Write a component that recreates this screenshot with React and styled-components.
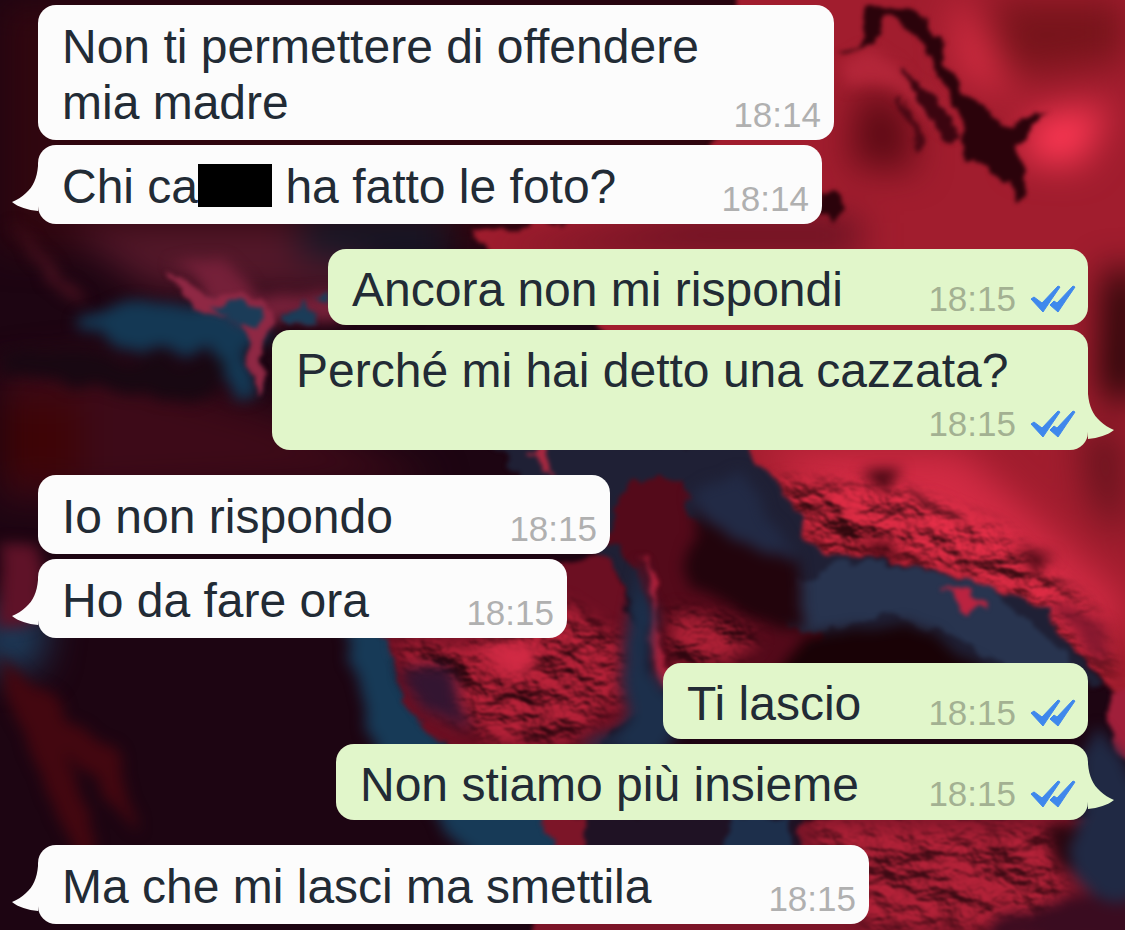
import React from "react";
import styled, { createGlobalStyle } from "styled-components";

const GlobalStyle = createGlobalStyle`
    *, *::before, *::after {
        box-sizing: border-box;
    }

    body {
        margin: 0;
        background-color: #1c0512;
        font-family: "Liberation Sans", Arial, sans-serif;
    }
`;

const Screen = styled.main`
    position: relative;
    overflow: hidden;
    min-height: 100vh;
    padding: 5px 37px 6px 38px;
`;

const WallpaperSvg = styled.svg`
    position: absolute;
    inset: 0;
    width: 100%;
    height: 100%;
`;

const Thread = styled.div`
    position: relative;
    display: flex;
    flex-direction: column;
    gap: 25px;
`;

const Group = styled.section`
    display: flex;
    flex-direction: column;
    align-items: ${props => (props.$mine ? "flex-end" : "flex-start")};
    gap: 5px;
`;

const Bubble = styled.article`
    position: relative;
    display: flex;
    flex-direction: ${props => (props.$stacked ? "column" : "row")};
    align-items: flex-end;
    justify-content: space-between;
    gap: 6px;
    width: ${props => props.$width}px;
    max-width: 100%;
    padding: ${props => (props.$mine ? "13px 12px 7px 24px" : "14px 13px 6px 24px")};
    border-radius: 18px;
    background-color: ${props => (props.$mine ? "#e1f6ca" : "#fcfcfc")};
`;

const MessageText = styled.p`
    align-self: flex-start;
    margin: 0;
    padding-bottom: ${props => (props.$mine ? "0" : "3px")};
    font-size: 48px;
    line-height: 56px;
    color: #222b35;
`;

const Meta = styled.div`
    display: flex;
    flex: none;
    align-items: center;
    gap: 14px;
    font-size: 35px;
    line-height: 38px;
    color: ${props => (props.$mine ? "#a3b192" : "#b0b0b0")};
`;

const Redacted = styled.span`
    display: inline-block;
    width: 74px;
    height: 43px;
    vertical-align: -4px;
    background-color: #000;
`;

const TailSvg = styled.svg`
    position: absolute;
    bottom: ${props => (props.$mine ? "11px" : "13px")};
    left: ${props => (props.$mine ? "100%" : "auto")};
    right: ${props => (props.$mine ? "auto" : "100%")};
    width: 26px;
    height: 45px;
    fill: ${props => (props.$mine ? "#e1f6ca" : "#fcfcfc")};
    transform: ${props => (props.$mine ? "scaleX(-1)" : "none")};
`;

const TicksSvg = styled.svg`
    width: 46px;
    height: 28px;
    fill: #3f88ec;
    stroke: #3f88ec;
    stroke-linejoin: round;
`;

const Tail = ({ mine }) => (
    <TailSvg $mine={mine} viewBox="0 0 26 45" aria-hidden="true">
        <path d="M26 0 C25 12 21 21 14 27 C10 31 5 34 0 36 C6 41 16 44 26 45 Z" />
    </TailSvg>
);

const Ticks = () => (
    <TicksSvg viewBox="0 0 46 28" role="img" aria-label="Letto">
        <path d="M1 14 L4 12 L12 18 L28 1 L30 2 Q21 15 13 27 Z" />
        <path d="M20 20 L24 16 L27 18 L43 1 L45 2 Q36 15 28 27 Z" />
    </TicksSvg>
);

const Wallpaper = () => (
    <WallpaperSvg viewBox="0 0 1125 930" preserveAspectRatio="xMidYMid slice" aria-hidden="true">
        <defs>
            <filter id="soft" x="-30%" y="-30%" width="160%" height="160%" colorInterpolationFilters="sRGB">
                <feGaussianBlur stdDeviation="18" />
            </filter>
            <filter id="hazy" x="-20%" y="-20%" width="140%" height="140%" colorInterpolationFilters="sRGB">
                <feTurbulence type="fractalNoise" baseFrequency="0.02" numOctaves="4" seed="3" result="n" />
                <feDisplacementMap in="SourceGraphic" in2="n" scale="30" xChannelSelector="R" yChannelSelector="G" />
                <feGaussianBlur stdDeviation="7" />
            </filter>
            <filter id="rough" x="-20%" y="-20%" width="140%" height="140%" colorInterpolationFilters="sRGB">
                <feTurbulence type="fractalNoise" baseFrequency="0.04" numOctaves="5" seed="7" result="n" />
                <feDisplacementMap in="SourceGraphic" in2="n" scale="24" xChannelSelector="R" yChannelSelector="G" />
                <feGaussianBlur stdDeviation="2" />
            </filter>
            <filter id="ridges" x="-10%" y="-10%" width="120%" height="120%" colorInterpolationFilters="sRGB">
                <feTurbulence type="fractalNoise" baseFrequency="0.02 0.03" numOctaves="5" seed="12" result="n" />
                <feDiffuseLighting in="n" surfaceScale="16" lightingColor="#f0304a" result="l">
                    <feDistantLight azimuth="300" elevation="48" />
                </feDiffuseLighting>
                <feGaussianBlur in="SourceAlpha" stdDeviation="9" result="edge" />
                <feComposite in="l" in2="edge" operator="in" />
                <feGaussianBlur stdDeviation="1" />
            </filter>
        </defs>

        <rect width="1125" height="930" fill="#1d0512" />
        <g filter="url(#soft)">
            <path d="M0 0 H840 V250 H0 Z" fill="#30060f" />
            <path d="M60 225 H320 L400 300 L150 290 Z" fill="#54182a" />
            <path d="M300 215 H450 V260 H300 Z" fill="#151827" />
            <path d="M0 370 L90 360 L270 410 L440 480 L0 500 Z" fill="#3d0a18" />
            <path d="M0 400 H80 V480 H0 Z" fill="#3e0406" />
            <path d="M-20 610 H50 L40 670 H-20 Z" fill="#1d3d5c" />
        </g>
        <g filter="url(#hazy)">
            <path d="M0 655 L45 690 L110 745 L140 830 L115 810 L70 750 L95 850 L80 860 L20 740 Z" fill="#430710" />
            <path d="M0 545 H40 V610 L0 625 Z" fill="#5f1228" />
            <path d="M8 225 L30 240 L85 305 L70 305 Z" fill="#4b1220" />
        </g>

        {/* red plateau on the right */}
        <g filter="url(#rough)">
            <path d="M745 -20 H1150 V720 L1080 660 L1010 600 L950 575 L880 558 L810 570 L770 500 L735 440 L600 330 L470 235 L700 200 Z" fill="#a11d2e" />
        </g>
        <g filter="url(#soft)">
            <path d="M690 220 H860 V250 H470 Z" fill="#5d1020" />
            <path d="M990 0 H1125 V60 L1010 75 Z" fill="#77141b" />
            <path d="M1035 115 L1110 105 L1080 165 L1020 160 Z" fill="#ff3854" />
            <path d="M950 0 L970 10 L1020 100 L960 75 Z" fill="#d42d42" />
            <path d="M860 90 L905 105 L915 170 L850 165 Z" fill="#5b0a14" />
            <path d="M750 450 H960 L1125 600 L1120 640 L900 540 Z" fill="#d22b44" />
            <path d="M1080 430 H1125 V540 L1090 500 Z" fill="#66131d" />
            <path d="M1105 270 H1140 V400 H1100 Z" fill="#1c0405" />
        </g>
        <path d="M775 480 L900 490 L1000 530 L1090 610 L1115 680 L1070 645 L1010 592 L880 552 L825 560 Z" fill="#fff" filter="url(#ridges)" opacity="0.7" />
        <g filter="url(#hazy)">
            <path d="M865 470 L905 478 L890 495 Z M1015 540 L1050 558 L1030 565 Z M870 540 L900 550 L880 558 Z" fill="#3b0610" />
            <path d="M1040 600 L1090 660 L1115 665 L1100 630 Z" fill="#86182f" />
            <path d="M840 60 Q880 50 905 72 L935 100 L950 140 L925 120 L895 80 L845 85 Z" fill="#b32639" />
        </g>

        {/* dark cracks */}
        <g filter="url(#rough)">
            <path d="M868 8 L905 8 Q938 25 948 65 L970 95 L1000 125 L1050 112 L1016 140 L1028 190 L1016 205 L990 168 L958 160 L966 125 L937 75 Q922 25 885 18 L878 42 L845 56 L866 32 Z" fill="#2b030b" />
            <path d="M902 66 L910 70 L937 105 L962 138 L948 142 L926 112 Z" fill="#3b0510" />
            <path d="M896 95 L906 108 L922 140 L920 150 L908 134 Z" fill="#4b0814" />
            <path d="M825 190 L842 205 L836 222 L820 215 Z" fill="#2b030b" />
        </g>

        {/* lagoon on the left */}
        <g filter="url(#hazy)">
            <path d="M70 330 Q130 296 185 300 L255 315 L268 335 L245 350 L262 395 L235 400 L215 350 L150 350 Z" fill="#143854" />
            <path d="M165 265 L225 262 L260 295 L340 285 V320 L270 322 L215 310 Z" fill="#752039" />
            <path d="M0 350 L110 352 L230 362 L210 400 L0 380 Z" fill="#180812" />
        </g>
        <g filter="url(#rough)">
            <path d="M165 270 L200 290 L262 300 L275 320 L262 350 L270 375 L254 395 L248 345 L240 318 L195 308 Z" fill="#8f2844" />
            <path d="M210 302 L262 306 L258 326 L240 330 Z M280 308 L305 304 L315 324 L295 322 Z M310 296 L332 290 V308 Z" fill="#1b3c58" />
        </g>

        {/* lower basin */}
        <g filter="url(#rough)">
            <path d="M490 440 L745 445 L790 500 L825 560 L890 560 L1030 600 L1100 680 L1050 700 L700 700 L600 560 Z" fill="#1f2035" />
            <path d="M625 480 L680 480 L720 560 L800 600 L820 640 L760 700 L650 690 L640 570 L605 540 Z" fill="#540a1a" />
            <path d="M770 590 L840 565 L890 562 L990 585 L1080 670 L1020 670 L900 615 L800 635 Z" fill="#28344f" />
            <path d="M540 440 L555 480 L530 450 Z" fill="#a82840" />
        </g>
        <g filter="url(#hazy)">
            <path d="M690 500 L730 510 L800 560 L800 630 L740 620 L690 580 Z" fill="#22040c" />
            <path d="M770 680 L800 640 L900 622 L1010 680 Z" fill="#190206" />
            <path d="M690 500 L745 470 L770 520 L800 560 L730 540 Z" fill="#222a45" />
            <path d="M345 610 L395 620 Q410 710 470 770 L640 860 L580 950 L400 780 Q350 700 345 610 Z" fill="#173a57" />
        </g>
        <g filter="url(#rough)">
            <path d="M375 600 L610 555 L640 640 L640 710 L600 745 L470 775 L430 730 L405 710 Z" fill="#6c0f22" />
            <path d="M945 588 L970 590 L985 615 L960 610 Z M975 604 L988 608 L982 618 Z" fill="#bb2340" />
            <path d="M645 550 L660 590 L660 640 L680 690 L662 690 L650 640 L654 600 Z" fill="#b3203a" />
        </g>
        <path d="M395 640 L470 645 L560 600 L620 640 L622 700 L570 740 L500 745 L425 700 Z M670 610 L730 620 L760 640 L720 665 L670 660 Z" fill="#fff" filter="url(#ridges)" opacity="0.6" />
        <g filter="url(#hazy)">
            <path d="M480 640 L540 645 L520 680 L495 670 Z" fill="#d12a44" />
            <path d="M405 665 L440 670 L475 725 L425 715 Z" fill="#331531" />
            <path d="M635 560 L648 600 L652 660 L680 720 L660 760 L580 745 L630 710 L628 610 Z" fill="#1c2f4b" />
        </g>

        {/* bottom shore */}
        <g filter="url(#rough)">
            <path d="M535 815 H1140 V945 H530 L560 850 Z" fill="#7c1528" />
            <path d="M590 810 L800 815 L800 870 H580 Z" fill="#1f1224" />
            <path d="M730 815 L785 815 L800 860 H720 Z" fill="#1d2f4b" />
            <path d="M1110 690 L1145 680 V780 L1115 750 Z" fill="#a01f3a" />
        </g>
        <path d="M810 825 L1050 830 L1065 900 L1050 925 L870 930 Z" fill="#fff" filter="url(#ridges)" opacity="0.5" />
        <g filter="url(#hazy)">
            <path d="M1045 820 H1080 V880 L1060 870 Z" fill="#28060f" />
            <path d="M1095 720 L1125 770 L1150 800 V910 H1110 Q1065 880 1080 820 Z" fill="#202944" />
            <path d="M1000 915 L1140 890 V945 H980 Z" fill="#3a0c20" />
        </g>
    </WallpaperSvg>
);

const thread = [
    {
        mine: false,
        messages: [
            { text: "Non ti permettere di offendere mia madre", time: "18:14", width: 796 },
            { text: <>Chi ca<Redacted aria-label="censurato" /> ha fatto le foto?</>, time: "18:14", width: 784 },
        ],
    },
    {
        mine: true,
        messages: [
            { text: "Ancora non mi rispondi", time: "18:15", width: 760 },
            { text: "Perché mi hai detto una cazzata?", time: "18:15", width: 816, stacked: true },
        ],
    },
    {
        mine: false,
        messages: [
            { text: "Io non rispondo", time: "18:15", width: 572 },
            { text: "Ho da fare ora", time: "18:15", width: 529 },
        ],
    },
    {
        mine: true,
        messages: [
            { text: "Ti lascio", time: "18:15", width: 425 },
            { text: "Non stiamo più insieme", time: "18:15", width: 752 },
        ],
    },
    {
        mine: false,
        messages: [
            { text: "Ma che mi lasci ma smettila", time: "18:15", width: 831 },
        ],
    },
];

const Message = ({ text, time, width, stacked, mine, last }) => (
    <Bubble $mine={mine} $stacked={stacked} $width={width}>
        <MessageText $mine={mine}>{text}</MessageText>
        <Meta $mine={mine}>
            <time>{time}</time>
            {mine && <Ticks />}
        </Meta>
        {last && <Tail mine={mine} />}
    </Bubble>
);

const App = () => {
    return (
        <Screen>
            <GlobalStyle />
            <Wallpaper />
            <Thread>
                {thread.map((group, g) => (
                    <Group key={g} $mine={group.mine}>
                        {group.messages.map((message, m) => (
                            <Message
                                key={m}
                                {...message}
                                mine={group.mine}
                                last={m === group.messages.length - 1}
                            />
                        ))}
                    </Group>
                ))}
            </Thread>
        </Screen>
    );
};

export default App;
